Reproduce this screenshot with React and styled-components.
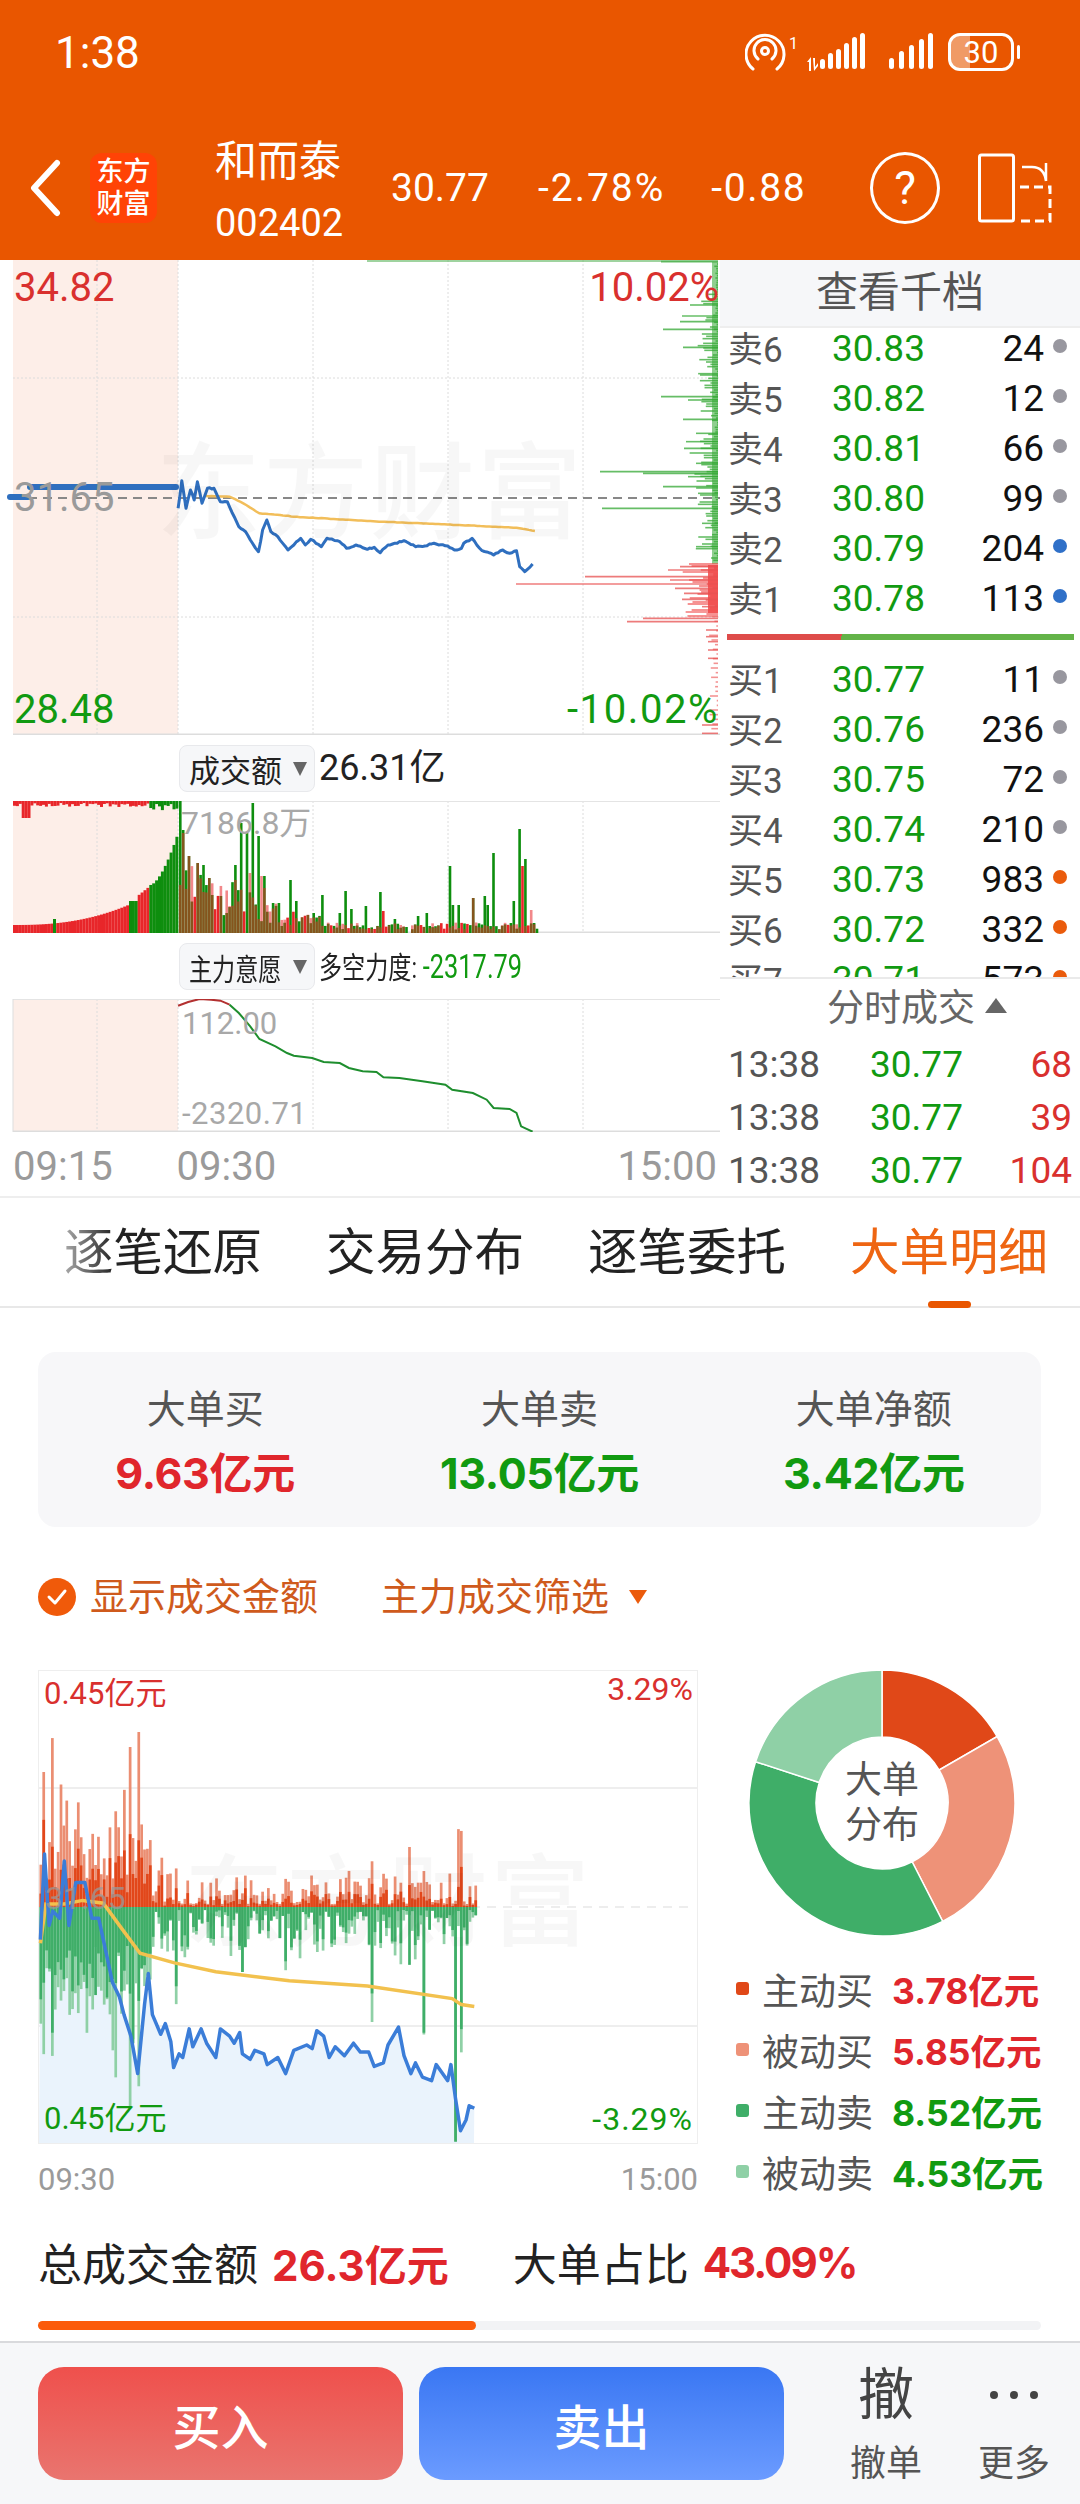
import React from 'react';
import styled, { createGlobalStyle } from 'styled-components';

const FONT = 'Roboto, "Noto Sans CJK SC", sans-serif';
const BOLD_FONT = 'Inter, "Noto Sans CJK SC", sans-serif';
const RED = '#D9302E';
const GREEN = '#119A11';
const GREY = '#9A9A9A';
const ORANGE = '#E95600';

const Global = createGlobalStyle`
  html, body { margin: 0; padding: 0; background: #fff; }
  * { box-sizing: border-box; }
`;

const rng = (seed) => () => {
  seed |= 0; seed = (seed + 0x6d2b79f5) | 0;
  let t = Math.imul(seed ^ (seed >>> 15), 1 | seed);
  t = (t + Math.imul(t ^ (t >>> 7), 61 | t)) ^ t;
  return ((t ^ (t >>> 14)) >>> 0) / 4294967296;
};

const Page = styled.div`
  width: 1080px; height: 2504px; overflow: hidden; display: flex; flex-direction: column;
  font-family: ${FONT}; background: #fff; color: #222;
`;

/* ---------- header ---------- */
const Header = styled.header`
  height: 260px; flex: none; background: ${ORANGE}; color: #fff; display: flex; flex-direction: column;
`;
const StatusBar = styled.div`
  height: 105px; flex: none; padding: 31px 66px 0 55px; display: flex; align-items: flex-start; justify-content: space-between;
`;
const Clock = styled.div`font-size: 44px; line-height: 44px;`;
const StatusIcons = styled.div`display: flex; align-items: center; height: 40px; margin-top: 1px;`;
const SignalGap = styled.span`width: 18px;`;
const Battery = styled.div`
  position: relative; width: 66px; height: 38px; margin-left: 14px; border: 3px solid #fff; border-radius: 12px;
  background: linear-gradient(90deg, #F09A66 0 32%, transparent 32%);
  display: flex; align-items: center; justify-content: center; font-size: 31px; line-height: 1;
  &::after { content: ''; position: absolute; right: -9px; top: 9px; width: 3px; height: 14px; background: #fff; border-radius: 2px; }
`;
const NavBar = styled.div`height: 155px; flex: none; padding: 11px 27px 0 29px; display: flex; align-items: center;`;
const Logo = styled.div`
  width: 67px; height: 70px; margin-left: 29px; border-radius: 12px; background: #FF4306;
  display: flex; align-items: center; justify-content: center; text-align: center;
  font-size: 27px; line-height: 32px; font-weight: 500;
`;
const StockName = styled.div`margin-left: 58px; width: 128px; display: flex; flex-direction: column; margin-top: 6px;`;
const StockTitle = styled.div`font-size: 42px; line-height: 44px; white-space: nowrap;`;
const StockCode = styled.div`font-size: 38px; line-height: 38px; margin-top: 20px;`;
const Quote = styled.div`
  font-size: 39px; line-height: 44px; margin-left: ${(p) => p.$gap}px; white-space: nowrap;
  letter-spacing: ${(p) => p.$ls || 0}px;
`;
const Help = styled.div`
  width: 70px; height: 72px; border: 3px solid #fff; border-radius: 50%; margin-left: 64px;
  display: flex; align-items: center; justify-content: center; font-size: 46px; line-height: 1;
`;
const HelpGap = styled.span`width: 38px;`;

/* ---------- quote area ---------- */
const QuoteArea = styled.section`height: 938px; flex: none; display: flex; border-bottom: 2px solid #eee;`;
const LeftCol = styled.div`width: 720px; flex: none; display: flex; flex-direction: column;`;
const ChartPane = styled.div`position: relative; height: ${(p) => p.$h}px; flex: none;`;
const Svg = styled.svg`display: block;`;
const Label = styled.span`
  position: absolute; line-height: 1; white-space: nowrap;
  font-size: ${(p) => p.$size}px; color: ${(p) => p.$color};
  ${(p) => (p.$left !== undefined ? `left:${p.$left}px;` : '')}
  ${(p) => (p.$right !== undefined ? `right:${p.$right}px;` : '')}
  top: ${(p) => p.$top}px;
  opacity: ${(p) => p.$op || 1};
  letter-spacing: ${(p) => p.$ls || 0}px;
`;
const Watermark = styled.span`
  position: absolute; left: ${(p) => p.$left}px; top: ${(p) => p.$top}px; font-size: ${(p) => p.$size}px; line-height: 1;
  font-weight: 500; color: rgba(0,0,0,0.03); white-space: nowrap; letter-spacing: 2px;
`;
const IndicatorBar = styled.div`height: ${(p) => p.$h}px; flex: none; padding: 10px 0 0 179px; display: flex; align-items: flex-start;`;
const Selector = styled.div`
  width: 136px; height: 47px; border: 1px solid #E8E9EC; border-radius: 8px; background: #F6F7F9;
  display: flex; align-items: center; justify-content: space-between; padding: 0 7px 0 ${(p) => p.$pad}px;
  font-size: ${(p) => p.$size}px; color: #222; white-space: nowrap;
`;
const Squeezed = styled.span`
  display: inline-block; width: ${(p) => p.$w}px; transform: scaleX(${(p) => p.$sx}); transform-origin: left center; white-space: nowrap;
`;
const Caret = styled.i`flex: none; width: 0; height: 0; border-left: 7px solid transparent; border-right: 7px solid transparent; border-top: 14px solid #666;`;
const BarValue = styled.div`margin-left: 4px; font-size: ${(p) => p.$size}px; line-height: 47px; white-space: nowrap;`;
const Green = styled.span`color: ${GREEN}; font-size: ${(p) => p.$size || 'inherit'};`;
const TimeAxis = styled.div`flex: 1; padding: 15px 3px 0 13px; display: flex; font-size: 40px; line-height: 1; color: ${GREY};`;
const TimeAxisMid = styled.span`margin-left: 64px; margin-right: auto;`;

/* ---------- right panel ---------- */
const RightCol = styled.div`width: 360px; flex: none; display: flex; flex-direction: column;`;
const DepthHeader = styled.div`
  position: relative; z-index: 1; height: 68px; flex: none; background: #F6F7F9; border-bottom: 2px solid #eee;
  display: flex; align-items: center; justify-content: center; font-size: 42px; line-height: 60px; color: #555;
`;
const DepthList = styled.div`height: 649px; flex: none; overflow: hidden;`;
const DepthScroll = styled.div`margin-top: -5px;`;
const DepthRow = styled.div`height: 50px; display: flex; align-items: center; padding-left: 8px; white-space: nowrap;`;
const DepthName = styled.span`width: 104px; font-size: 35px; color: #555; margin-top: -3px;`;
const DepthPrice = styled.span`width: 93px; font-size: 37px; color: ${GREEN};`;
const DepthVol = styled.span`width: 119px; text-align: right; font-size: 37px; color: #111;`;
const Dot = styled.i`width: 14px; height: 14px; border-radius: 50%; margin: -4px 0 0 9px; background: ${(p) => p.$c};`;
const Ratio = styled.div`
  height: 6px; margin: 11px 6px 14px 7px;
  background: linear-gradient(101deg, #DE4C4A 0 33%, #63B348 33%);
`;
const TradeHeader = styled.div`
  height: 61px; flex: none; border-top: 2px solid #EAEAEA; display: flex; align-items: center; justify-content: center;
  font-size: 37px; line-height: 54px; padding: 0 0 0 34px; color: #666; gap: 10px;
`;
const UpCaret = styled.i`width: 0; height: 0; border-left: 11px solid transparent; border-right: 11px solid transparent; border-bottom: 15px solid #666; margin-top: -6px;`;
const TradeRow = styled.div`height: 53px; flex: none; display: flex; align-items: center; padding: 0 8px 0 8px; font-size: 37px; white-space: nowrap;`;
const TradeTime = styled.span`width: 142px; color: #555;`;
const TradePrice = styled.span`color: ${GREEN};`;
const TradeVol = styled.span`margin-left: auto; color: ${RED};`;

/* ---------- tabs ---------- */
const Tabs = styled.nav`
  height: 110px; flex: none; display: flex; gap: 66px; padding: 21px 0 0 64px; border-bottom: 2px solid #E8E8E8;
`;
const Tab = styled.div`
  position: relative; width: 196px; height: 87px; font-size: 49.5px; line-height: 68px; white-space: nowrap;
  color: ${(p) => (p.$active ? '#EE6512' : '#222')};
  ${(p) => p.$fade && 'background: linear-gradient(90deg, #aaa 0, #222 50px); -webkit-background-clip: text; background-clip: text; color: transparent;'}
`;
const TabMark = styled.i`
  position: absolute; left: 78px; bottom: -2px; width: 43px; height: 7px; border-radius: 4px; background: ${ORANGE};
`;

const Detail = styled.main`flex: 1; padding: 44px 39px 0 38px; display: flex; flex-direction: column;`;
const SummaryCard = styled.div`
  height: 175px; flex: none; background: #F7F7F9; border-radius: 18px; display: grid; grid-template-columns: repeat(3, 1fr);
`;
const SummaryCell = styled.div`display: flex; flex-direction: column; align-items: center; padding-top: 36px;`;
const SummaryLabel = styled.div`font-size: 39px; line-height: 44px; color: #555;`;
const SummaryValue = styled.div`font-family: ${BOLD_FONT}; font-size: 43px; line-height: 50px; margin-top: 16px; font-weight: 700; color: ${(p) => p.$c}; letter-spacing: -0.3px;`;
const Options = styled.div`height: 38px; margin-top: 51px; flex: none; display: flex; align-items: center; color: #CF5A1C; font-size: 38px; line-height: 36px; white-space: nowrap;`;
const CheckDot = styled.span`
  width: 38px; height: 38px; border-radius: 50%; background: #F05A0A; display: flex; align-items: center; justify-content: center; margin-right: 14px;
`;
const FilterText = styled.span`margin-left: 63px;`;
const FilterCaret = styled.i`width: 0; height: 0; margin-left: 20px; border-left: 9px solid transparent; border-right: 9px solid transparent; border-top: 14px solid #EB5B0C;`;

const AnalysisRow = styled.div`margin-top: 54px; display: flex; height: 535px; flex: none;`;
const AnalysisChart = styled.div`width: 660px; flex: none; display: flex; flex-direction: column;`;
const AxisRow = styled.div`display: flex; justify-content: space-between; font-size: 31px; line-height: 1; color: ${GREY}; padding-top: 20px;`;
const Distribution = styled.div`flex: 1; display: flex; flex-direction: column; padding-left: 38px;`;
const Donut = styled.div`position: relative; width: 266px; height: 266px; margin-left: 13px;`;
const DonutText = styled.div`
  position: absolute; inset: 0; display: flex; align-items: center; justify-content: center; text-align: center;
  font-size: 37px; line-height: 45px; color: #555; width: 266px;
`;
const Legend = styled.div`margin-top: 22px; display: flex; flex-direction: column;`;
const LegendRow = styled.div`height: 61px; display: flex; align-items: center; white-space: nowrap;`;
const LegendSwatch = styled.i`width: 13px; height: 13px; border-radius: 3px; background: ${(p) => p.$c}; margin-right: 13px;`;
const LegendName = styled.span`font-size: 37px; color: #555; width: 130px;`;
const LegendValue = styled.span`font-family: ${BOLD_FONT}; font-size: 35.5px; font-weight: 700; color: ${(p) => p.$c};`;

const Totals = styled.div`margin-top: 34px; height: 46px; flex: none; display: flex; align-items: center; font-size: 44px; white-space: nowrap; color: #222;`;
const TotalValue = styled.b`font-family: ${BOLD_FONT}; color: #E0262C; margin: 0 ${(p) => p.$mr}px 0 14px; font-size: 42px; letter-spacing: ${(p) => p.$ls || 0}px;`;
const Progress = styled.div`margin-top: 36px; height: 9px; border-radius: 5px; background: #F2F3F5; flex: none;`;
const ProgressFill = styled.div`height: 100%; border-radius: 5px; background: #FB5B0A;`;

const Footer = styled.footer`
  height: 163px; flex: none; background: #F6F7F9; border-top: 2px solid #D9DADD; padding: 24px 30px 0 38px; display: flex; align-items: flex-start;
`;
const TradeBtn = styled.div`
  width: 365px; height: 113px; flex: none; border-radius: 26px; margin-right: ${(p) => p.$mr}px; background: ${(p) => p.$bg};
  display: flex; align-items: center; justify-content: center; color: #fff; font-size: 48px; font-weight: 500;
`;
const FootAction = styled.div`width: 72px; flex: none; margin-left: ${(p) => p.$ml}px; display: flex; flex-direction: column; align-items: center; color: #555;`;
const FootGlyph = styled.div`height: 64px; font-size: 56px; line-height: 56px; color: #444; white-space: nowrap;`;
const MoreDots = styled.div`height: 64px; display: flex; gap: 12px; padding-top: 24px;`;
const MoreDot = styled.i`width: 8px; height: 8px; border-radius: 50%; background: #444;`;
const FootLabel = styled.div`font-size: 36px; line-height: 44px; margin-top: 11px; white-space: nowrap;`;

/* ---------- chart helpers ---------- */
const poly = (pts) => pts.map((p) => `${p[0].toFixed(1)},${p[1].toFixed(1)}`).join(' ');
const jitter = (pts, seed, step, amp) => {
  const r = rng(seed); const out = [];
  for (let i = 0; i < pts.length - 1; i++) {
    const [a, b] = pts[i]; const [c, d] = pts[i + 1];
    const n = Math.max(1, Math.round((c - a) / step));
    for (let k = 0; k < n; k++) {
      const t = k / n;
      out.push([a + (c - a) * t, b + (d - b) * t + (k ? (r() - 0.5) * amp : 0)]);
    }
  }
  out.push(pts[pts.length - 1]);
  return out;
};
const mainMap = (p) => [p[0] / 2.178, 260 + p[1] / 3];
const bottomMap = (p) => [p[0] / 2.178, 1670 + (p[1] - 85) / 2.8];
const subMap = (p) => [p[0] / 2.178, 999 + (p[1] - 748) / 3];

const mainLine = [[388,745],[396,662],[405,745],[415,690],[423,720],[430,665],[440,730],[452,685],[466,685],[480,725],[495,725],[510,770],[520,800],[535,815],[550,850],[563,875],[572,810],[581,780],[590,815],[605,830],[627,870],[640,855],[655,835],[665,855],[677,838],[700,860],[712,835],[740,845],[755,865],[775,855],[800,868],[815,862],[828,878],[845,855],[880,842],[905,860],[925,858],[945,850],[975,858],[990,870],[1005,865],[1010,850],[1028,835],[1050,872],[1075,885],[1095,870],[1110,880],[1125,872],[1132,920],[1143,935],[1160,912]].map(mainMap);
const mainAvg = [[448,708],[500,710],[530,730],[565,760],[610,765],[640,770],[800,783],[1000,795],[1125,803],[1165,813]].map(mainMap);
const subRed = [[388,768],[410,757],[435,748],[460,750],[480,753],[500,765]].map(subMap);
const subGreen = [[500,765],[520,790],[545,830],[565,868],[600,890],[625,910],[640,918],[680,925],[705,937],[740,940],[760,955],[790,965],[820,967],[835,983],[870,985],[920,995],[970,1005],[985,1020],[1030,1030],[1060,1050],[1075,1075],[1110,1078],[1125,1090],[1135,1130],[1160,1146]].map(subMap);
const botLine = [[88,840],[97,600],[107,800],[115,760],[130,780],[140,620],[150,800],[165,680],[185,680],[200,780],[215,780],[235,900],[245,960],[260,1000],[270,1050],[285,1110],[300,1215],[315,1020],[323,935],[332,1050],[350,1105],[360,1075],[372,1125],[378,1198],[390,1160],[398,1170],[412,1090],[420,1140],[438,1090],[450,1130],[470,1170],[480,1090],[500,1110],[510,1130],[522,1100],[528,1160],[545,1175],[555,1150],[575,1160],[582,1190],[605,1170],[622,1215],[640,1150],[668,1135],[680,1145],[690,1095],[705,1110],[717,1170],[730,1140],[750,1165],[770,1130],[785,1155],[803,1155],[815,1195],[835,1185],[845,1135],[868,1085],[880,1165],[895,1215],[905,1185],[920,1225],[940,1235],[950,1190],[975,1235],[982,1190],[992,1285],[1003,1375],[1015,1345],[1022,1305],[1033,1312]].map(bottomMap);
const botAvg = [[88,850],[100,740],[140,740],[180,730],[225,738],[260,800],[305,878],[380,905],[470,930],[630,955],[800,970],[985,1005],[1005,1022],[1033,1027]].map(bottomMap);

const V_LINES = [97, 178, 313, 448, 583];

const depthBars = (() => {
  const r = rng(7); const bars = [];
  const gPeaks = [[5,661],[135,690],[168,682],[185,680],[208,663],[262,683],[345,700],[410,661],[420,688],[478,683],[520,696],[545,686],[565,684],[610,696],[635,600],[640,643],[650,688],[680,663],[700,698],[745,602],[790,702],[860,696]];
  const rPeaks = [[920,680],[930,668],[950,585],[960,670],[972,516],[985,675],[1000,684],[1018,682],[1040,702],[1075,643],[1085,627],[1110,706],[1130,706],[1145,708],[1170,708],[1195,708],[1395,702],[1420,702]];
  for (let zy = 12; zy < 905; zy += 7) bars.push([717 - r() * r() * (zy < 90 ? 4 : zy > 540 && zy < 700 ? 40 : 24), 260 + zy / 3, '#33A833']);
  for (let zy = 912; zy < 1070; zy += 6) bars.push([716 - r() * 34, 260 + zy / 3, '#F04848']);
  for (let zy = 1070; zy < 1420; zy += 14) bars.push([717 - r() * 8, 260 + zy / 3, '#F07070']);
  gPeaks.forEach(([zy, x]) => bars.push([x, 260 + zy / 3, '#33A833']));
  rPeaks.forEach(([zy, x]) => bars.push([x, 260 + zy / 3, '#E85050']));
  bars.push([367, 261, '#55B055']);
  return bars;
})();

const volBars = (() => {
  const r = rng(21);
  const gP = {390:132,398:103,410:77,428:70,442:68,452:55,462:38,478:37,490:20,508:68,522:110,533:100,548:130,560:97,572:57,590:30,603:30,627:53,640:32,680:20,700:38,735:20,749:42,763:24,793:27,827:41,855:14,905:17,925:20,980:67,985:28,998:28,1025:35,1050:37,1060:28,1072:80,1118:32,1132:104,1142:74,1160:10};
  const rP = {398:100,410:77,430:70,455:55,510:53,540:60,565:57,575:45,830:22,1028:35,1135:67,1155:23};
  const N = 124; const g = new Array(N).fill(0); const red = new Array(N).fill(0);
  for (let i = 0; i < N; i++) {
    const x = 179 + i * 2.9;
    const floor = x < 275 ? 18 + (275 - x) / 3.5 : x < 320 ? 12 : 6;
    g[i] = r() > 0.25 ? floor * (0.5 + r() * 1.2) : 0;
    red[i] = r() > 0.15 ? floor * (0.6 + r() * 1.2) : 0;
  }
  const put = (arr, m) => Object.keys(m).forEach((k) => {
    const i = Math.round((k / 2.178 - 179) / 2.9);
    if (i >= 0 && i < N) arr[i] = m[k];
  });
  put(g, gP); put(red, rP);
  return { g, red };
})();

const preBars = (() => {
  const r = rng(5); const out = [];
  for (let x = 13; x < 176; x += 2.9) {
    let h; let c = '#E8262A';
    if (x < 127) h = 8 + ((x - 13) / 114) ** 2.4 * 20;
    else if (x < 135) { h = 32; c = '#0E8E0E'; }
    else if (x < 149) h = 36 + (x - 135) * 0.8;
    else { h = 48 + ((x - 149) / 27) ** 1.6 * 50; c = '#0E8E0E'; }
    out.push({ x, h, c, top: x < 19 || x > 29 ? 2 + r() * 4 : 17, tc: x < 148 ? '#E8262A' : '#0E8E0E', tx: x > 148 ? 3 + r() * 7 : 0 });
  }
  return out;
})();

const flowBars = (() => {
  const r = rng(99);
  const N = 152;
  const arr = Array.from({ length: N }, (_, i) => {
    const x = 39.5 + i * 2.88;
    const left = x < 150;
    const u = r(); const v = r(); const w = r();
    const bl = left ? 28 + u * 55 : 3 + u * u * 34;
    const sd = left ? 36 + v * 70 : 3 + v * v * 38;
    const sl = sd + (left ? w * 45 : w * w * 22);
    return { x, bl, bd: bl * 0.5, sl, sd };
  });
  const set = (key, list) => list.forEach(([zx, zy]) => {
    const i = Math.round((zx / 2.178 - 39.5) / 2.88);
    if (i >= 0 && i < N) arr[i][key] = Math.abs(zy - 748) / 2.8;
  });
  set('bl', [[92,370],[110,275],[127,405],[140,450],[170,455],[182,600],[235,525],[250,480],[265,420],[282,300],[300,258],[315,585],[348,610],[380,640],[455,680],[510,665],[530,660],[580,695],[660,700],[740,670],[805,620],[830,655],[870,680],[890,580],[915,680],[960,680],[993,530],[1003,535],[1022,690]]);
  arr.forEach((b) => { b.bd = b.bl * (0.25 + r() * 0.4); });
  set('sl', [[92,1160],[110,1165],[128,1010],[150,1050],[170,1045],[205,860],[250,1225],[282,1310],[297,1250],[378,1020],[527,930],[620,925],[807,1070],[920,1105],[1003,1155],[992,1405]]);
  set('sd', [[90,960],[108,1100],[150,870],[240,950],[285,1130],[378,970],[527,930],[620,900],[807,990],[920,1100],[992,1405],[1003,1090],[890,910]]);
  return arr;
})();

const arc = (cx, cy, R, r, a0, a1) => {
  const p = (rad, a) => [cx + rad * Math.sin(a), cy - rad * Math.cos(a)];
  const [x0, y0] = p(R, a0); const [x1, y1] = p(R, a1); const [x2, y2] = p(r, a1); const [x3, y3] = p(r, a0);
  const large = a1 - a0 > Math.PI ? 1 : 0;
  return `M${x0} ${y0}A${R} ${R} 0 ${large} 1 ${x1} ${y1}L${x2} ${y2}A${r} ${r} 0 ${large} 0 ${x3} ${y3}Z`;
};

const SLICES = [[3.78, '#E04818'], [5.85, '#EE9278'], [8.52, '#3FAE68'], [4.53, '#8FD0A6']];

const DonutChart = () => {
  let a = 0; const total = 22.68;
  return (
    <Svg width="266" height="266" viewBox="0 0 266 266">
      {SLICES.map(([v, c]) => {
        const a1 = a + (v / total) * Math.PI * 2;
        const d = arc(133, 133, 133, 66, a, a1);
        a = a1;
        return <path key={c} d={d} fill={c} stroke="#fff" strokeWidth="1.5" />;
      })}
    </Svg>
  );
};

const Grid = ({ y0, y1, lines = [] }) => (
  <g>
    {V_LINES.map((x) => <line key={x} x1={x} x2={x} y1={y0} y2={y1} stroke="#DCDCDC" strokeWidth="1" strokeDasharray="2 2" />)}
    {lines.map((y) => <line key={y} x1="13" x2="720" y1={y} y2={y} stroke="#DCDCDC" strokeWidth="1" strokeDasharray="2 2" />)}
  </g>
);

const SELL = [['卖6','30.83','24','#98979F'],['卖5','30.82','12','#98979F'],['卖4','30.81','66','#98979F'],['卖3','30.80','99','#98979F'],['卖2','30.79','204','#2F70C8'],['卖1','30.78','113','#2F70C8']];
const BUY = [['买1','30.77','11','#98979F'],['买2','30.76','236','#98979F'],['买3','30.75','72','#98979F'],['买4','30.74','210','#98979F'],['买5','30.73','983','#EA5B0C'],['买6','30.72','332','#EA5B0C'],['买7','30.71','573','#EA5B0C']];

const Row = ({ d }) => (
  <DepthRow>
    <DepthName>{d[0]}</DepthName><DepthPrice>{d[1]}</DepthPrice><DepthVol>{d[2]}</DepthVol><Dot $c={d[3]} />
  </DepthRow>
);

const HotspotIcon = () => (
  <Svg width="61" height="38" viewBox="0 0 61 38" fill="none" stroke="#fff" strokeWidth="3" strokeLinecap="round">
    <circle cx="20" cy="18" r="3.5" />
    <path d="M13 26a11 11 0 1 1 14 0" />
    <path d="M8 36a19 19 0 1 1 24 0" />
    <text x="44" y="16" fontSize="16" fill="#fff" stroke="none" fontFamily="Roboto">1</text>
  </Svg>
);
const SignalIcon = ({ w, bars, extra }) => (
  <Svg width={w} height="38" viewBox={`0 0 ${w} 38`} fill="#fff">
    {extra && <path d="M1 29l4-5v14H3V29zM7 25h2v9l3-4v3l-4 5z" />}
    {bars.map((b) => <rect key={b[0]} x={b[0]} y={36 - b[1]} width="5" height={b[1]} rx="2.5" />)}
  </Svg>
);
const SplitIcon = () => (
  <Svg width="74" height="70" viewBox="0 0 74 70" fill="none" stroke="#fff" strokeWidth="3">
    <rect x="1.5" y="2" width="34" height="66" rx="2" />
    <path d="M44 14h10q12 0 14 14M68 28V10" strokeWidth="2.5" />
    <path d="M42 34h30v34H42" strokeDasharray="9 5" />
  </Svg>
);

export default function App() {
  return (
    <Page>
      <Global />
      <Header>
        <StatusBar>
          <Clock>1:38</Clock>
          <StatusIcons>
            <HotspotIcon />
            <SignalIcon w="64" extra bars={[[14,10],[22,16],[30,20],[38,26],[46,32],[54,36]]} />
            <SignalGap />
            <SignalIcon w="46" bars={[[1,11],[11,18],[21,24],[31,30],[40,36]]} />
            <Battery>30</Battery>
          </StatusIcons>
        </StatusBar>
        <NavBar>
          <Svg width="32" height="58" viewBox="0 0 32 58" fill="none" stroke="#fff" strokeWidth="6" strokeLinecap="round" strokeLinejoin="round">
            <path d="M28 4L5 29l23 25" />
          </Svg>
          <Logo>东方<br />财富</Logo>
          <StockName>
            <StockTitle>和而泰</StockTitle>
            <StockCode>002402</StockCode>
          </StockName>
          <Quote $gap={48}>30.77</Quote>
          <Quote $gap={49} $ls={2}>-2.78%</Quote>
          <Quote $gap={46} $ls={1.6}>-0.88</Quote>
          <Help>?</Help>
          <HelpGap />
          <SplitIcon />
        </NavBar>
      </Header>

      <QuoteArea>
        <LeftCol>
          <ChartPane $h={475}>
            <Svg width="720" height="475" viewBox="0 260 720 475">
              <rect x="13" y="260" width="165" height="475" fill="#FDEEE8" />
              <Grid y0={260} y1={735} lines={[378, 617]} />
              <line x1="13" x2="720" y1="498" y2="498" stroke="#888" strokeWidth="2" strokeDasharray="9 6" />
              <line x1="13" x2="720" y1="734.5" y2="734.5" stroke="#DDD" strokeWidth="2" />
              <rect x="712" y="262" width="6" height="302" fill="#33A833" opacity="0.55" />
              <rect x="708" y="565" width="10" height="48" fill="#F04848" opacity="0.85" />
              {depthBars.map((b, i) => <line key={i} x1={b[0]} x2="718" y1={b[1]} y2={b[1]} stroke={b[2]} strokeWidth="1.6" opacity="0.75" />)}
              <path d="M10 497H28" stroke="#2F6FBF" strokeWidth="6" strokeLinecap="round" />
              <path d="M30 487H176" stroke="#2F6FBF" strokeWidth="6" strokeLinecap="round" />
              <polyline points={poly(jitter(mainAvg, 3, 3, 0.4))} fill="none" stroke="#F2BE5A" strokeWidth="2.5" />
              <polyline points={poly(jitter(mainLine, 4, 2.4, 1.4))} fill="none" stroke="#2F6FBF" strokeWidth="3" strokeLinejoin="round" />
            </Svg>
            <Watermark $left={156} $top={182} $size={105}>东方财富</Watermark>
            <Label $left={14} $top={8} $size={40} $color={RED}>34.82</Label>
            <Label $right={1} $top={8} $size={40} $color={RED}>10.02%</Label>
            <Label $left={14} $top={218} $size={40} $color={GREY}>31.65</Label>
            <Label $left={14} $top={430} $size={40} $color={GREEN}>28.48</Label>
            <Label $right={1} $top={430} $size={40} $color={GREEN} $ls={1.6}>-10.02%</Label>
          </ChartPane>

          <IndicatorBar $h={66}>
            <Selector $pad={9} $size={31}>成交额<Caret /></Selector>
            <BarValue $size={36}>26.31亿</BarValue>
          </IndicatorBar>

          <ChartPane $h={132}>
            <Svg width="720" height="132" viewBox="0 801 720 132">
              <rect x="13" y="801" width="165" height="132" fill="#FDEEE8" />
              <Grid y0={801} y1={933} />
              <line x1="13" x2="720" y1="801.5" y2="801.5" stroke="#E4E4E4" />
              <line x1="13" x2="720" y1="932.5" y2="932.5" stroke="#DDD" strokeWidth="2" />
              {preBars.map((b, i) => (
                <g key={i}>
                  <rect x={b.x} y={933 - b.h} width="3" height={b.h} fill={b.c} />
                  <rect x={b.x} y={801} width="3" height={b.tx || b.top} fill={b.tc} />
                </g>
              ))}
              <rect x="53" y="919" width="3" height="14" fill="#0E8E0E" />
              {volBars.g.map((h, i) => <rect key={i} x={179 + i * 2.9} y={933 - h} width="2.6" height={h} fill="#0E8E0E" />)}
              {volBars.red.map((h, i) => <rect key={i} x={179 + i * 2.9} y={933 - h} width="2.6" height={h} fill="#E8262A" opacity={volBars.g[i] > 0 ? 0.55 : 1} />)}
            </Svg>
            <Label $left={181} $top={6} $size={32} $color="#A8A8A8">7186.8万</Label>
          </ChartPane>

          <IndicatorBar $h={66}>
            <Selector $pad={9} $size={30}><Squeezed $w={92} $sx={0.77}>主力意愿</Squeezed><Caret /></Selector>
            <BarValue $size={30}>
              <Squeezed $w={200} $sx={0.77}>多空力度: <Green $size="33px">-2317.79</Green></Squeezed>
            </BarValue>
          </IndicatorBar>

          <ChartPane $h={133}>
            <Svg width="720" height="133" viewBox="0 999 720 133">
              <rect x="13" y="999" width="165" height="133" fill="#FDEEE8" />
              <Grid y0={999} y1={1132} />
              <line x1="13" x2="720" y1="999.5" y2="999.5" stroke="#E4E4E4" />
              <line x1="13" y1="999" x2="13" y2="1132" stroke="#DDD" />
              <line x1="13" x2="720" y1="1131.5" y2="1131.5" stroke="#DDD" strokeWidth="2" />
              <polyline points={poly(subRed)} fill="none" stroke="#B33030" strokeWidth="2" />
              <polyline points={poly(subGreen)} fill="none" stroke="#1E8E2E" strokeWidth="2" />
            </Svg>
            <Label $left={182} $top={9} $size={31} $color="#A8A8A8">112.00</Label>
            <Label $left={182} $top={99} $size={31} $color="#A8A8A8" $ls={0.5}>-2320.71</Label>
          </ChartPane>

          <TimeAxis><span>09:15</span><TimeAxisMid>09:30</TimeAxisMid><span>15:00</span></TimeAxis>
        </LeftCol>

        <RightCol>
          <DepthHeader>查看千档</DepthHeader>
          <DepthList>
            <DepthScroll>
              {SELL.map((d) => <Row key={d[0]} d={d} />)}
              <Ratio />
              {BUY.map((d) => <Row key={d[0]} d={d} />)}
            </DepthScroll>
          </DepthList>
          <TradeHeader>分时成交<UpCaret /></TradeHeader>
          {['68', '39', '104'].map((v) => (
            <TradeRow key={v}><TradeTime>13:38</TradeTime><TradePrice>30.77</TradePrice><TradeVol>{v}</TradeVol></TradeRow>
          ))}
        </RightCol>
      </QuoteArea>

      <Tabs>
        <Tab $fade>逐笔还原</Tab>
        <Tab>交易分布</Tab>
        <Tab>逐笔委托</Tab>
        <Tab $active>大单明细<TabMark /></Tab>
      </Tabs>

      <Detail>
        <SummaryCard>
          <SummaryCell><SummaryLabel>大单买</SummaryLabel><SummaryValue $c="#E0262C">9.63亿元</SummaryValue></SummaryCell>
          <SummaryCell><SummaryLabel>大单卖</SummaryLabel><SummaryValue $c={GREEN}>13.05亿元</SummaryValue></SummaryCell>
          <SummaryCell><SummaryLabel>大单净额</SummaryLabel><SummaryValue $c={GREEN}>3.42亿元</SummaryValue></SummaryCell>
        </SummaryCard>

        <Options>
          <CheckDot>
            <Svg width="22" height="18" viewBox="0 0 22 18" fill="none" stroke="#fff" strokeWidth="3" strokeLinecap="round" strokeLinejoin="round"><path d="M3 9l6 6L19 3" /></Svg>
          </CheckDot>
          显示成交金额
          <FilterText>主力成交筛选</FilterText>
          <FilterCaret />
        </Options>

        <AnalysisRow>
          <AnalysisChart>
            <ChartPane $h={474}>
              <Svg width="660" height="474" viewBox="38 1670 660 474">
                <rect x="38.5" y="1670.5" width="659" height="473" fill="#fff" stroke="#EEE" />
                <line x1="39" x2="697" y1="1788" y2="1788" stroke="#EEE" strokeWidth="2" />
                <line x1="39" x2="697" y1="2026" y2="2026" stroke="#EEE" strokeWidth="2" />
                <line x1="39" x2="690" y1="1907" y2="1907" stroke="#E8E8E8" strokeWidth="1.5" strokeDasharray="9 7" />
                <polygon points={`${poly(botLine)} 474,2143 39,2143`} fill="#EAF3FC" />
                {flowBars.map((b, i) => (
                  <g key={i}>
                    <rect x={b.x} y={1907 - b.bl} width="2.7" height={b.bl} fill="#EB8E72" />
                    <rect x={b.x} y={1907 - b.bd} width="2.7" height={b.bd} fill="#E2471A" />
                    <rect x={b.x} y={1907} width="2.7" height={b.sl} fill="#8FD0A6" />
                    <rect x={b.x} y={1907} width="2.7" height={b.sd} fill="#3FAE68" />
                  </g>
                ))}
                <polyline points={poly(botAvg)} fill="none" stroke="#F2C14E" strokeWidth="3.5" />
                <polyline points={poly(botLine)} fill="none" stroke="#3B7DD8" strokeWidth="3.5" strokeLinejoin="round" />
              </Svg>
              <Watermark $left={146} $top={184} $size={100}>东方财富</Watermark>
              <Label $left={6} $top={8} $size={31} $color={RED}>0.45亿元</Label>
              <Label $right={5} $top={3} $size={32} $color={RED}>3.29%</Label>
              <Label $left={6} $top={433} $size={31} $color={GREEN}>0.45亿元</Label>
              <Label $right={5} $top={433} $size={32} $color={GREEN} $ls={1}>-3.29%</Label>
              <Label $left={7} $top={212} $size={32} $color="#999" $op={0.75}>31.65</Label>
            </ChartPane>
            <AxisRow><span>09:30</span><span>15:00</span></AxisRow>
          </AnalysisChart>
          <Distribution>
            <Donut>
              <DonutChart />
              <DonutText>大单<br />分布</DonutText>
            </Donut>
            <Legend>
              <LegendRow><LegendSwatch $c="#E04818" /><LegendName>主动买</LegendName><LegendValue $c="#E0262C">3.78亿元</LegendValue></LegendRow>
              <LegendRow><LegendSwatch $c="#EE9278" /><LegendName>被动买</LegendName><LegendValue $c="#E0262C">5.85亿元</LegendValue></LegendRow>
              <LegendRow><LegendSwatch $c="#3FAE68" /><LegendName>主动卖</LegendName><LegendValue $c={GREEN}>8.52亿元</LegendValue></LegendRow>
              <LegendRow><LegendSwatch $c="#8FD0A6" /><LegendName>被动卖</LegendName><LegendValue $c={GREEN}>4.53亿元</LegendValue></LegendRow>
            </Legend>
          </Distribution>
        </AnalysisRow>

        <Totals>
          总成交金额<TotalValue $mr={64}>26.3亿元</TotalValue>
          大单占比<TotalValue $mr={0} $ls={-2}>43.09%</TotalValue>
        </Totals>
        <Progress><ProgressFill style={{ width: '43.7%' }} /></Progress>
      </Detail>

      <Footer>
        <TradeBtn $mr={16} $bg="linear-gradient(180deg,#EF504C,#E9756F)">买入</TradeBtn>
        <TradeBtn $mr={0} $bg="linear-gradient(180deg,#3A77F3,#6B9BFF)">卖出</TradeBtn>
        <FootAction $ml={66}><FootGlyph>撤</FootGlyph><FootLabel>撤单</FootLabel></FootAction>
        <FootAction $ml={56}><MoreDots><MoreDot /><MoreDot /><MoreDot /></MoreDots><FootLabel>更多</FootLabel></FootAction>
      </Footer>
    </Page>
  );
}
